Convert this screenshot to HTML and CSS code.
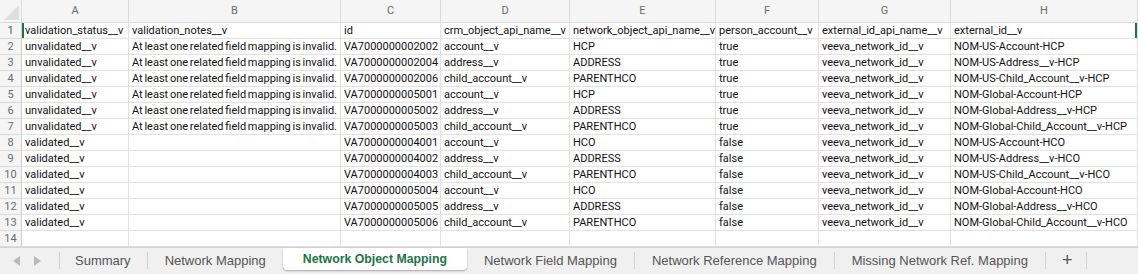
FILE: index.html
```html
<!DOCTYPE html>
<html>
<head>
  <link rel="stylesheet" href="styles.css">
</head>
<body>
  <div class="sheet">
    <div class="corner"></div>
    <div class="col-head">A</div>
    <div class="col-head">B</div>
    <div class="col-head">C</div>
    <div class="col-head">D</div>
    <div class="col-head">E</div>
    <div class="col-head">F</div>
    <div class="col-head">G</div>
    <div class="col-head">H</div>

    <div class="row-head active">1</div>
    <div class="cell sel-left">validation_status__v</div>
    <div class="cell">validation_notes__v</div>
    <div class="cell">id</div>
    <div class="cell">crm_object_api_name__v</div>
    <div class="cell">network_object_api_name__v</div>
    <div class="cell">person_account__v</div>
    <div class="cell">external_id_api_name__v</div>
    <div class="cell sel-right">external_id__v</div>

    <div class="row-head">2</div>
    <div class="cell">unvalidated__v</div>
    <div class="cell">At least one related field mapping is invalid.</div>
    <div class="cell">VA7000000002002</div>
    <div class="cell">account__v</div>
    <div class="cell">HCP</div>
    <div class="cell">true</div>
    <div class="cell">veeva_network_id__v</div>
    <div class="cell">NOM-US-Account-HCP</div>

    <div class="row-head">3</div>
    <div class="cell">unvalidated__v</div>
    <div class="cell">At least one related field mapping is invalid.</div>
    <div class="cell">VA7000000002004</div>
    <div class="cell">address__v</div>
    <div class="cell">ADDRESS</div>
    <div class="cell">true</div>
    <div class="cell">veeva_network_id__v</div>
    <div class="cell">NOM-US-Address__v-HCP</div>

    <div class="row-head">4</div>
    <div class="cell">unvalidated__v</div>
    <div class="cell">At least one related field mapping is invalid.</div>
    <div class="cell">VA7000000002006</div>
    <div class="cell">child_account__v</div>
    <div class="cell">PARENTHCO</div>
    <div class="cell">true</div>
    <div class="cell">veeva_network_id__v</div>
    <div class="cell">NOM-US-Child_Account__v-HCP</div>

    <div class="row-head">5</div>
    <div class="cell">unvalidated__v</div>
    <div class="cell">At least one related field mapping is invalid.</div>
    <div class="cell">VA7000000005001</div>
    <div class="cell">account__v</div>
    <div class="cell">HCP</div>
    <div class="cell">true</div>
    <div class="cell">veeva_network_id__v</div>
    <div class="cell">NOM-Global-Account-HCP</div>

    <div class="row-head">6</div>
    <div class="cell">unvalidated__v</div>
    <div class="cell">At least one related field mapping is invalid.</div>
    <div class="cell">VA7000000005002</div>
    <div class="cell">address__v</div>
    <div class="cell">ADDRESS</div>
    <div class="cell">true</div>
    <div class="cell">veeva_network_id__v</div>
    <div class="cell">NOM-Global-Address__v-HCP</div>

    <div class="row-head">7</div>
    <div class="cell">unvalidated__v</div>
    <div class="cell">At least one related field mapping is invalid.</div>
    <div class="cell">VA7000000005003</div>
    <div class="cell">child_account__v</div>
    <div class="cell">PARENTHCO</div>
    <div class="cell">true</div>
    <div class="cell">veeva_network_id__v</div>
    <div class="cell">NOM-Global-Child_Account__v-HCP</div>

    <div class="row-head">8</div>
    <div class="cell">validated__v</div>
    <div class="cell"></div>
    <div class="cell">VA7000000004001</div>
    <div class="cell">account__v</div>
    <div class="cell">HCO</div>
    <div class="cell">false</div>
    <div class="cell">veeva_network_id__v</div>
    <div class="cell">NOM-US-Account-HCO</div>

    <div class="row-head">9</div>
    <div class="cell">validated__v</div>
    <div class="cell"></div>
    <div class="cell">VA7000000004002</div>
    <div class="cell">address__v</div>
    <div class="cell">ADDRESS</div>
    <div class="cell">false</div>
    <div class="cell">veeva_network_id__v</div>
    <div class="cell">NOM-US-Address__v-HCO</div>

    <div class="row-head">10</div>
    <div class="cell">validated__v</div>
    <div class="cell"></div>
    <div class="cell">VA7000000004003</div>
    <div class="cell">child_account__v</div>
    <div class="cell">PARENTHCO</div>
    <div class="cell">false</div>
    <div class="cell">veeva_network_id__v</div>
    <div class="cell">NOM-US-Child_Account__v-HCO</div>

    <div class="row-head">11</div>
    <div class="cell">validated__v</div>
    <div class="cell"></div>
    <div class="cell">VA7000000005004</div>
    <div class="cell">account__v</div>
    <div class="cell">HCO</div>
    <div class="cell">false</div>
    <div class="cell">veeva_network_id__v</div>
    <div class="cell">NOM-Global-Account-HCO</div>

    <div class="row-head">12</div>
    <div class="cell">validated__v</div>
    <div class="cell"></div>
    <div class="cell">VA7000000005005</div>
    <div class="cell">address__v</div>
    <div class="cell">ADDRESS</div>
    <div class="cell">false</div>
    <div class="cell">veeva_network_id__v</div>
    <div class="cell">NOM-Global-Address__v-HCO</div>

    <div class="row-head">13</div>
    <div class="cell">validated__v</div>
    <div class="cell"></div>
    <div class="cell">VA7000000005006</div>
    <div class="cell">child_account__v</div>
    <div class="cell">PARENTHCO</div>
    <div class="cell">false</div>
    <div class="cell">veeva_network_id__v</div>
    <div class="cell">NOM-Global-Child_Account__v-HCO</div>

    <div class="row-head">14</div>
    <div class="cell"></div>
    <div class="cell"></div>
    <div class="cell"></div>
    <div class="cell"></div>
    <div class="cell"></div>
    <div class="cell"></div>
    <div class="cell"></div>
    <div class="cell"></div>
  </div>

  <div class="tab-bar">
    <div class="tab-nav">
      <span class="arrow left"></span>
      <span class="arrow right"></span>
    </div>
    <div class="tab">Summary</div>
    <div class="tab">Network Mapping</div>
    <div class="tab current">Network Object Mapping</div>
    <div class="tab">Network Field Mapping</div>
    <div class="tab">Network Reference Mapping</div>
    <div class="tab">Missing Network Ref. Mapping</div>
    <div class="tab add">+</div>
  </div>
</body>
</html>
```

FILE: styles.css
```css
body {
  margin: 0;
  background: #fff;
  font-family: Roboto, "Liberation Sans", sans-serif;
  overflow: hidden;
  width: 1138px;
  height: 274px;
}

.sheet {
  display: grid;
  grid-template-columns: 22px 107px 212px 100px 129px 146px 103px 132px 187px;
  grid-template-rows: 23px repeat(14, 16px);
  height: 247px;
}

.corner,
.col-head,
.row-head {
  background: #f5f5f5;
  color: #6b6b6b;
  box-sizing: border-box;
  border-right: 1px solid #d9d9d9;
  border-bottom: 1px solid #d9d9d9;
}

.corner {
  position: relative;
}

.corner::after {
  content: "";
  position: absolute;
  right: 2px;
  bottom: 2px;
  border-left: 15px solid transparent;
  border-bottom: 15px solid #dedede;
}

.col-head {
  font-size: 11px;
  text-align: center;
  line-height: 22px;
}

.row-head {
  font-size: 11px;
  text-align: center;
  line-height: 15px;
  border-right-color: #cfcfcf;
}

.row-head.active {
  color: #217346;
}

.cell {
  box-sizing: border-box;
  border-right: 1px solid #e1e1e1;
  border-bottom: 1px solid #e1e1e1;
  padding-left: 3px;
  font-size: 11px;
  line-height: 16px;
  word-spacing: -1px;
  color: #111;
  white-space: nowrap;
  overflow: hidden;
}

.sel-left {
  box-shadow: inset 2px 0 0 #217346;
}

.sel-right {
  box-shadow: inset -2px 0 0 #217346;
}

.tab-bar {
  display: flex;
  align-items: stretch;
  height: 27px;
  box-sizing: border-box;
  border-top: 1px solid #d4d4d4;
  background: #f0f0f0;
  font-family: "Liberation Sans", Arial, sans-serif;
  font-size: 13px;
  color: #555;
}

.tab-nav {
  width: 60px;
  display: flex;
  align-items: center;
  gap: 14px;
  padding-left: 13px;
  box-sizing: border-box;
  border-right: 1px solid #d4d4d4;
  margin: 4px 0 5px;
}

.arrow {
  width: 0;
  height: 0;
  border-top: 5px solid transparent;
  border-bottom: 5px solid transparent;
}

.arrow.left {
  border-right: 7px solid #b9b9b9;
}

.arrow.right {
  border-left: 7px solid #b9b9b9;
}

.tab {
  display: flex;
  align-items: center;
  padding: 0 17px;
  margin: 4px 0 5px;
  border-right: 1px solid #d4d4d4;
}

.tab:nth-child(2) {
  padding: 0 16px 0 15px;
}

.tab.current {
  margin: 0 0 4px -1px;
  background: #fff;
  color: #217346;
  font-size: 12.3px;
  font-weight: bold;
  border-right: none;
  border-radius: 0 0 4px 4px;
  box-shadow: 0 1px 2px rgba(0, 0, 0, 0.3);
  padding: 0 20px;
}

.tab.add {
  font-size: 18px;
  padding: 0 14px 0 16px;
}
```
